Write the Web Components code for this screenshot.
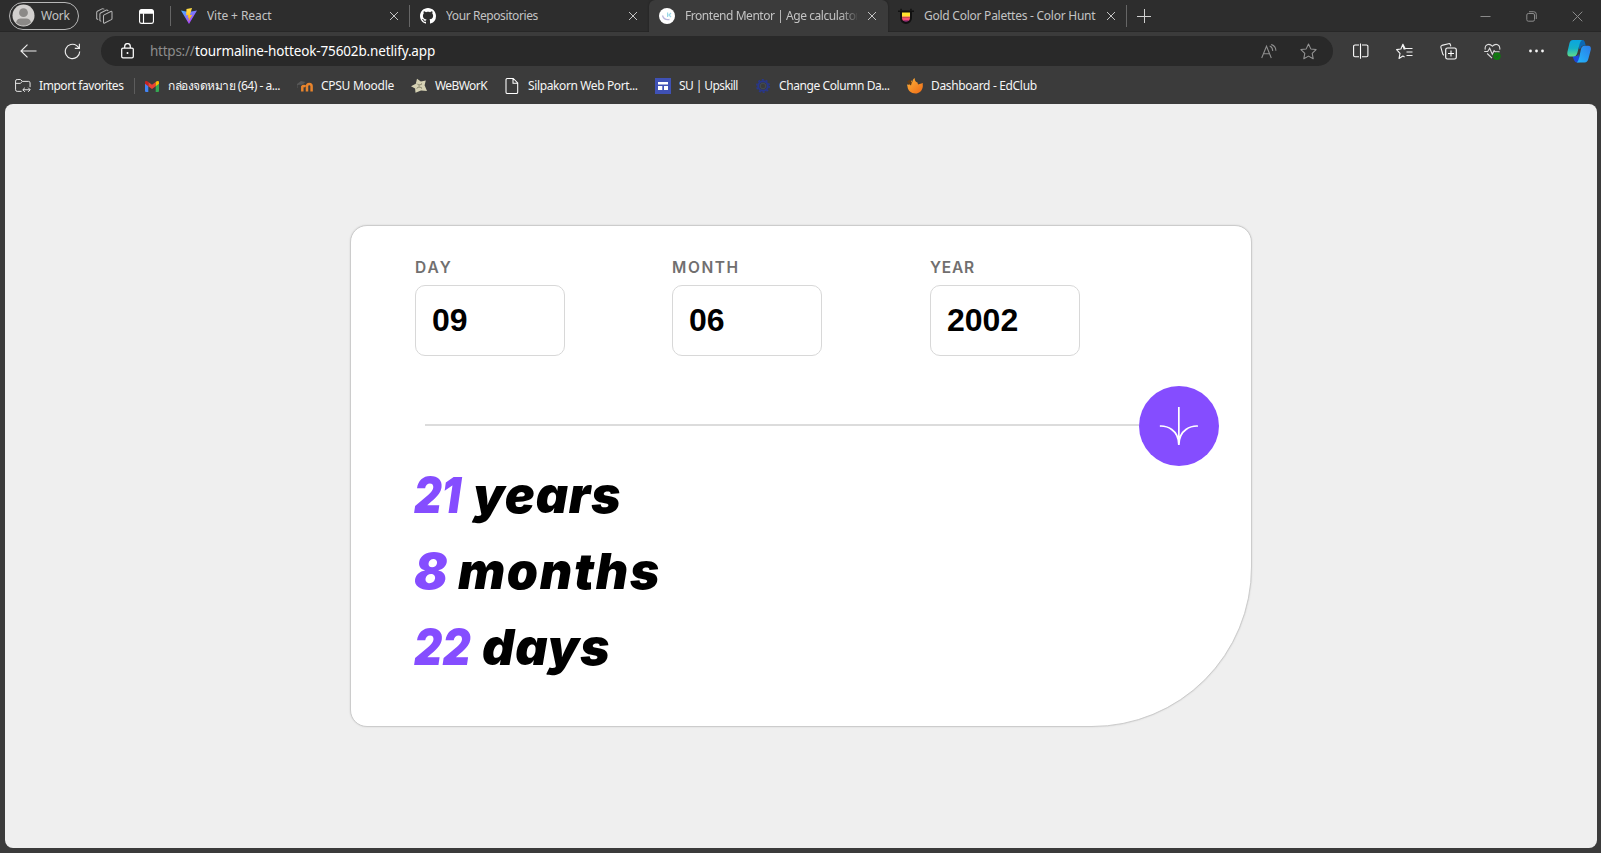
<!DOCTYPE html>
<html lang="en">
<head>
<meta charset="utf-8">
<title>Frontend Mentor | Age calculator app</title>
<style>
html,body{margin:0;height:100%;overflow:hidden;background:#3b3b3b}
body{font-family:"Noto Sans","Open Sans",sans-serif;font-size:12px;color:#fff}
browser-window{height:853px}
</style>
</head>
<body>
<browser-window></browser-window>
<script>
const define=(name,html,extra)=>{
  const t=document.createElement('template');t.innerHTML=html;
  customElements.define(name,class extends HTMLElement{
    constructor(){super();this.attachShadow({mode:'open'}).append(t.content.cloneNode(true));}
    connectedCallback(){extra&&extra(this,this.shadowRoot);}
  });
};

/* Text that tracks itself to occupy exactly w pixels. */
define('fit-text',`<style>:host{display:block;white-space:pre;flex:none}span{display:inline-block}</style><span><slot></slot></span>`,(el,r)=>{
  const w=+el.getAttribute('w'),s=r.querySelector('span');
  el.style.width=w+'px';
  const n=[...el.textContent].length;
  s.style.letterSpacing='0px';
  s.style.letterSpacing=((w-s.offsetWidth)/n)+'px';
});

const icons={
vite:['0 0 32 32','<defs><linearGradient id="a" x1="0" y1="0" x2=".7" y2="1"><stop stop-color="#41b6ff"/><stop offset="1" stop-color="#bd34fe"/></linearGradient><linearGradient id="b" x1="0" y1="0" x2="0" y2="1"><stop stop-color="#ffe14a"/><stop offset="1" stop-color="#ffa800"/></linearGradient></defs><path fill="url(#a)" d="M0 5l15 3 17-3-16 27z"/><path fill="url(#b)" d="M22 0l-11 2-.8 13 4.300-1-1.300 6 3-1-2 8.500 8.500-14-5 1z"/>'],
github:['0 0 16 16','<path fill="#fff" d="M8 0C3.580 0 0 3.580 0 8c0 3.540 2.290 6.530 5.470 7.590.4.070.55-.17.55-.38 0-.19-.010-.82-.010-1.490-2.010.37-2.530-.49-2.690-.94-.090-.23-.48-.94-.82-1.130-.28-.15-.68-.52-.010-.53.63-.010 1.080.58 1.230.82.72 1.210 1.870.87 2.330.66.070-.52.28-.87.510-1.070-1.780-.2-3.640-.89-3.640-3.950 0-.87.31-1.590.82-2.150-.080-.2-.36-1.020.080-2.120 0 0 .67-.21 2.200.82.64-.18 1.320-.27 2-.27s1.360.090 2 .27c1.530-1.040 2.200-.82 2.200-.82.44 1.100.16 1.920.080 2.120.51.56.82 1.270.82 2.150 0 3.070-1.870 3.750-3.650 3.950.29.25.54.73.54 1.480 0 1.070-.010 1.930-.010 2.200 0 .21.15.46.55.38A8.010 8.010 0 0016 8c0-4.420-3.580-8-8-8z"/>'],
frontend:['0 0 16 16','<circle cx="8" cy="8" r="8" fill="#fff"/><path fill="none" stroke="#b9b5dc" stroke-width="1.300" d="M3.500 7.500c1 3.200 4 4.600 7 4"/><path fill="none" stroke="#9ad8e8" stroke-width="1.200" d="M8.600 4.500v4.500M12 5L10 7l2 2"/>'],
hunt:['0 0 16 16','<path fill="#111" d="M0 2.500h16v1.500h-2V10a6 6 0 01-12 0V4H0zM2.300 .8h1.500v1.500H2.300zM12.200 .8h1.500v1.500h-1.500z"/><path fill="#ffe22e" d="M4 4.500h8V8H4z"/><path fill="#ff9a4d" d="M4 8h8v1.500H4z"/><path fill="#f24d70" d="M4 9.500h8c0 2-.5 2.500-1.200 3.300H5.200C4.500 12 4 11.500 4 9.500z"/><path fill="#8a2b80" d="M5.200 12.500h5.600c-1.500 1.700-4 1.700-5.600 0z"/>'],
close:['0 0 10 10','<path d="M1 1l8 8M9 1L1 9" fill="none" stroke="#c4c4c4" stroke-width="1"/>'],
plus:['0 0 14 14','<path d="M7.500 0v14M0 7.500h14" fill="none" stroke="#d0d0d0" stroke-width="1"/>'],
person:['0 0 24 24','<circle cx="12" cy="12" r="11.500" fill="#d2d0ce"/><circle cx="12" cy="9" r="4.600" fill="#8b8987"/><path fill="#8b8987" d="M4.200 19.200C5 16 7 15 9 15h6c2.500 0 4.300 1.200 4.800 4.200a11 11 0 01-15.600 0z"/>'],
workspaces:['0 0 17 16','<g fill="none" stroke="#b5b5b5" stroke-width="1.050" stroke-linejoin="round"><path d="M2.200 11.600L.7 10.800V4.500Q.7 3.700 1.400 3.300L6 .9q.8-.4 1.500 0l.8.4"/><path d="M5.300 13.400l-1.400-.8V6.200q0-.8.700-1.200L10 2.200q.8-.4 1.500 0l.8.500"/><path d="M7.500 8.100q0-.8.700-1.200L14.800 3.500q1.200-.5 1.200.6v6.300q0 .8-.7 1.200L8.700 15q-1.200.5-1.200-.6z"/></g>'],
tabact:['0 0 14 14','<path d="M2.500.6h9a2 2 0 012 2v8.800a2 2 0 01-2 2h-9a2 2 0 01-2-2V2.600a2 2 0 012-2zM4.200 4v9" fill="none" stroke="#fff" stroke-width="1.050"/><path fill="#fff" d="M.5 2.500a2 2 0 012-2h9a2 2 0 012 2v2H.5z"/>'],
back:['0 0 17 14','<path d="M16.500 7H1.200M7.500.7L1 7l6.500 6.300" fill="none" stroke="#ededed" stroke-width="1.150"/>'],
reload:['0 0 17 17','<path d="M15.700 8.500A7.200 7.200 0 1112.700 2.600l2.600 2.500M15.400.8v4.500h-4.600" fill="none" stroke="#ededed" stroke-width="1.150"/>'],
lock:['0 0 13 16','<rect x=".7" y="5" width="11.600" height="9.800" rx="1.300" fill="none" stroke="#fff" stroke-width="1.250"/><path d="M3.700 5V3.400a2.800 2.800 0 015.600 0V5" fill="none" stroke="#fff" stroke-width="1.250"/><circle cx="6.500" cy="9.900" r="1" fill="#fff"/>'],
read:['0 0 16 15','<path d="M.7 14L5.500 2.200 10.300 14M2.300 9.800h6.500M8.700 2c2 .8 3 2.500 3 5M10.200.400c3.200 1 4.700 3.200 4.700 6.400" fill="none" stroke="#8f8f8f" stroke-width="1.050"/>'],
star:['0 0 17 17','<path d="M8.500 1l2.300 4.900 5.300.7-3.900 3.700 1 5.400-4.700-2.600-4.700 2.600 1-5.400L.9 6.600l5.300-.7z" fill="none" stroke="#959595" stroke-width="1.050" stroke-linejoin="round"/>'],
split:['0 0 16 16','<path d="M6 2H2A1.300 1.300 0 00.6 3.300v9.200A1.300 1.300 0 002 13.800h4M9 2h4.500a1.300 1.300 0 011.400 1.300v9.200a1.300 1.300 0 01-1.400 1.300h-4.500M7.500 .5v15.300" fill="none" stroke="#fff" stroke-width="1.100"/>'],
favs:['0 0 17 17','<path d="M9.500 5.900L8 6 6.900 1.200 4.900 6l-4.300.6L4 10.300 3 15.500l3.900-2.400 1.700.8M9.500 5.500h7M10.500 9h6M10.500 12.500h6M6.900 1.200l2.300 4.500" fill="none" stroke="#f2f2f2" stroke-width="1.150" stroke-linejoin="round"/>'],
collections:['0 0 17 17','<path d="M4 12.300c-.8-.2-1.200-.8-1.400-1.600L.9 4.300C.7 3.400 1 2.700 1.900 2.400L8.500.7c.9-.2 1.700.2 1.900 1l.4 1.600" fill="none" stroke="#eee" stroke-width="1.100"/><rect x="5.700" y="5" width="10.600" height="11" rx="1.800" fill="none" stroke="#fff" stroke-width="1.150"/><path d="M11 7.500v6M8 10.500h6" stroke="#fff" stroke-width="1.100"/>'],
heart:['0 0 17 17','<path d="M1.300 6.600C.2 1.700 5-.4 8.400 3.200c3.500-3.600 8.200-1.500 7.300 3.400M.2 8.500h3.500l2-3.200 2.600 6 1.800-3.600 1 1h4.500M3.200 10.500l4.800 4.700" fill="none" stroke="#ddd" stroke-width="1.100"/><circle cx="13" cy="13.300" r="3.700" fill="#0f7a0f"/><path d="M11.300 13.300l1.200 1.200 2.200-2.300" fill="none" stroke="#3a3a3a" stroke-width=".8"/>'],
dots:['0 0 16 4','<g fill="#f5f5f5"><circle cx="2.500" cy="2" r="1.400"/><circle cx="8.500" cy="2" r="1.400"/><circle cx="14.500" cy="2" r="1.400"/></g>'],
copilot:['0 0 24 23','<defs><linearGradient id="a" x1="0" y1="0" x2="0" y2="1"><stop stop-color="#0ba5e0"/><stop offset=".5" stop-color="#15b0c8"/><stop offset="1" stop-color="#62dc86"/></linearGradient><linearGradient id="b" x1="1" y1="0" x2="0" y2="1"><stop stop-color="#2c7be8"/><stop offset="1" stop-color="#22b8fb"/></linearGradient></defs><path fill="#0b68b4" d="M12 0h3.500c2 0 2.500 2 3.200 5.600h-1.700c-2 0-3 1.200-3.500 3L12 9z"/><path fill="#1d48d8" d="M5.500 16H10l1.500-2 1 8.500H10c-2.500 0-3.300-3-4.500-6.500z"/><path fill="url(#a)" d="M6 0h9c-1.600 1-2.200 3.500-3 6.500L10.300 13c-.8 2.300-1.800 3.600-4.300 3.600H3C.7 16.600 0 14.500.4 12L2.500 3C3.100 1 4.100 0 6 0z"/><path fill="url(#b)" d="M17.500 5.800h3.700c2.300 0 3 1.700 2.600 4L21.300 19c-.6 2.200-1.600 3.500-3.600 3.500H9.600c1.800-1 2-3 2.800-6l1.500-7c.7-2.500 1.400-3.700 3.600-3.700z"/>'],
folder:['0 0 17 16','<path d="M7 13.700H2.300A1.700 1.700 0 01.6 12V2.800A1.700 1.700 0 012.300 1.100h3.500l2 2h6.600a1.600 1.600 0 011.600 1.600v4.500M.6 5.200h5l2.200-2M8.500 12h7.500M10.500 9.800L8.300 12l2.200 2.200M14 9.800l2.200 2.200L14 14.200" fill="none" stroke="#e8e8e8" stroke-width="1.050"/>'],
gmail:['0 0 16 16','<path fill="#4285f4" d="M1 4.500l3.300 2.400V14H2a1 1 0 01-1-1z"/><path fill="#34a853" d="M15 4.500l-3.300 2.400V14H14a1 1 0 001-1z"/><path fill="#ea4335" d="M4.300 4L8 6.800 11.700 4v4.200L8 11 4.300 8.200z"/><path fill="#c5221f" d="M1 4.500C1 2.800 2.800 2.700 4.300 4v4.200L1 5.800z"/><path fill="#fbbc04" d="M15 4.500c0-1.700-1.800-1.800-3.300-.5v4.200L15 5.800z"/>'],
moodle:['0 0 16 16','<path d="M5.300 13.500V8.700a1.800 1.800 0 013 0M10 13.500V8.200a2.300 2.300 0 014.600 0v5.300" fill="none" stroke="#e8842c" stroke-width="2.500"/><path fill="#585858" d="M0 6l4-3 4.500 1-3 2.500-5 .5v3H0z"/>'],
webwork:['0 0 16 16','<path fill="#d6d2b4" d="M6 .8l3.800 2.800 5-1-1.200 4.600L16 13l-6-.5-5.500 2.300-.4-4.300L0 8.300l4.800-2.500z"/><path fill="none" stroke="#8f8c74" stroke-width=".7" d="M6 5.500l5 5.500M11 5L5.500 11M7 6.500h4M6 9.500h5"/>'],
file:['0 0 16 16','<path d="M3.300.5h5.900l4.500 4.500v9.200a1.300 1.300 0 01-1.300 1.300H3.300A1.300 1.300 0 012 14.200V1.800A1.300 1.300 0 013.300.5zM9 .7v4.600h4.500" fill="none" stroke="#fff" stroke-width="1.050"/>'],
su:['0 0 16 16','<path fill="#3f51b5" d="M0 0h16v16H0z"/><path fill="#fff" d="M3 4h10v2.600H3zM3 8h4.300v4H3zM9 8h4v4H9z"/>'],
gear:['0 0 16 16','<circle cx="8" cy="8" r="4.800" fill="none" stroke="#29378a" stroke-width="2"/><circle cx="8" cy="8" r="6.200" fill="none" stroke="#29378a" stroke-width="1.600" stroke-dasharray="2 1.900"/><circle cx="8" cy="8" r="2.800" fill="none" stroke="#45515a" stroke-width=".8"/>'],
edclub:['0 0 16 16','<defs><linearGradient id="a" x1="0" y1="0" x2="1" y2="1"><stop stop-color="#ffb43a"/><stop offset="1" stop-color="#ee6a16"/></linearGradient></defs><path fill="url(#a)" d="M7.800 0c-.3 2.500.8 4 2.700 4.500L11 6.500l5-1.500c-.6 1 .1 1.900-.3 4.200C15 13 12 15.500 8.500 15.500 4 15.500.8 12.500.5 8.500L0 6.500l2 .3C2 4.500 3 2.800 4.500 2.500L5.300 4.500C5.400 2.500 6.200.8 7.800 0z"/><path fill="#5c3a18" d="M0 3.500L3 1.500l1.800 3L4 7.500 1.800 6z"/>'],
arrow:['0 0 46 44','<path fill="none" stroke="#fff" stroke-width="2" d="M1 22.019C8.333 21.686 23 25.616 23 44M23 44V0M45 22.019C37.667 21.686 23 25.616 23 44"/>'],
min:['0 0 11 11','<path d="M.5 5.500h10" stroke="#8a8a8a"/>'],
restore:['0 0 11 11','<rect x=".8" y="2.500" width="7.700" height="7.700" rx="1.500" fill="none" stroke="#8a8a8a"/><path d="M3 .7h4.700a2.600 2.600 0 012.600 2.600V8" fill="none" stroke="#8a8a8a"/>'],
exit:['0 0 11 11','<path d="M.7.7l9.600 9.600M10.300.700L.7 10.300" stroke="#8a8a8a"/>']
};
define('ui-icon',`<style>:host{display:block;flex:none}svg{display:block;width:100%;height:100%}</style><div></div>`,(el,r)=>{
  const [vb,body]=icons[el.getAttribute('name')],[,,vw,vh]=vb.split(' ');
  el.style.width=(el.getAttribute('w')||vw)+'px';
  const h=(el.getAttribute('h')||el.getAttribute('w')||vh)+'px';
  el.style.height=h;r.querySelector('div').style.height=h;
  r.querySelector('div').innerHTML=`<svg viewBox="${vb}">${body}</svg>`;
});

define('browser-tab',`<style>
:host{display:flex;align-items:center;box-sizing:border-box;width:239px;height:32px;padding:0 10px;gap:10px;color:#c3c3c3;border-right:1px solid transparent}
:host([divider]){border-image:linear-gradient(transparent 6px,#666 6px,#666 26px,transparent 26px) 1}
:host([active]){background:#3b3b3b;border-radius:6px 6px 0 0;box-shadow:0 0 2px #1c1c1c;clip-path:inset(0 -3px 0 -3px)}
.t{flex:1;min-width:0;overflow:hidden;height:18px;line-height:18px;margin-top:-1px}
:host([fade]) .t{-webkit-mask:linear-gradient(90deg,#000 155px,transparent 175px)}
</style><span id="i"></span><div class="t"><slot></slot></div><ui-icon name="close"></ui-icon>`,(el,r)=>{
  r.querySelector('#i').innerHTML=`<ui-icon name="${el.getAttribute('icon')}" w="16"></ui-icon>`;
});

define('tab-strip',`<style>
:host{display:flex;align-items:center;height:32px;background:#2d2d2d;box-shadow:inset 0 -1px #272727;padding-left:9px}
.profile{display:flex;align-items:center;gap:6px;box-sizing:border-box;width:70px;height:28px;border:1px solid #b8b8b8;border-radius:14px;padding-left:2px;color:#c3c3c3;margin-top:-1px}
.a{margin-left:17px}.b{margin-left:26px}
.sep{width:1px;height:20px;background:#666;margin-left:16px}
.new{margin-left:10px;margin-top:-1px}
.win{margin-left:auto;display:flex;gap:35px;padding-right:18px}
</style>
<div class="profile"><ui-icon name="person" w="23"></ui-icon><fit-text w="29">Work</fit-text></div>
<ui-icon class="a" name="workspaces"></ui-icon><ui-icon class="b" name="tabact" w="15"></ui-icon><div class="sep"></div>
<browser-tab icon="vite" divider><fit-text w="65">Vite + React</fit-text></browser-tab>
<browser-tab icon="github"><fit-text w="92">Your Repositories</fit-text></browser-tab>
<browser-tab icon="frontend" active fade><fit-text w="198">Frontend Mentor | Age calculator app</fit-text></browser-tab>
<browser-tab icon="hunt" divider><fit-text w="171">Gold Color Palettes - Color Hunt</fit-text></browser-tab>
<ui-icon class="new" name="plus"></ui-icon>
<div class="win"><ui-icon name="min"></ui-icon><ui-icon name="restore"></ui-icon><ui-icon name="exit"></ui-icon></div>`);

define('tool-bar',`<style>
:host{display:flex;align-items:center;height:30px;margin-top:4px;padding-left:20px}
.pill{display:flex;align-items:center;box-sizing:border-box;width:1232px;height:30px;border-radius:15px;background:#292929;margin-left:20px;padding:0 16px 0 20px;font-size:13.500px}
.url{display:flex;margin-left:16px;line-height:20px}
.read{margin-left:auto;margin-right:23px}
.tools{display:flex;align-items:center;gap:27px;margin-left:20px}
</style>
<ui-icon name="back"></ui-icon><ui-icon name="reload" style="margin-left:27px"></ui-icon>
<div class="pill"><ui-icon name="lock"></ui-icon><div class="url"><fit-text w="45" style="color:#8c8c8c">https://</fit-text><fit-text w="240">tourmaline-hotteok-75602b.netlify.app</fit-text></div>
<ui-icon class="read" name="read"></ui-icon><ui-icon name="star"></ui-icon></div>
<div class="tools"><ui-icon name="split"></ui-icon><ui-icon name="favs"></ui-icon><ui-icon name="collections"></ui-icon><ui-icon name="heart"></ui-icon><ui-icon name="dots"></ui-icon><ui-icon name="copilot" style="margin-left:-4px"></ui-icon></div>`);

define('book-mark',`<style>:host{display:flex;align-items:center;gap:8px;line-height:18px}</style><span id="i"></span><slot></slot>`,(el,r)=>{
  r.querySelector('#i').innerHTML=`<ui-icon name="${el.getAttribute('icon')}" w="16"></ui-icon>`;
});
define('bookmark-bar',`<style>:host{display:flex;align-items:center;gap:17px;box-sizing:border-box;height:38px;padding:2px 0 0 15px;color:#f5f5f5}
.sep{width:1px;height:16px;background:#5d5d5d;margin:0 -8px 0 -6px}</style>
<book-mark icon="folder"><fit-text w="84">Import favorites</fit-text></book-mark><div class="sep"></div>
<book-mark icon="gmail"><fit-text w="112">กล่องจดหมาย (64) - a...</fit-text></book-mark>
<book-mark icon="moodle"><fit-text w="73">CPSU Moodle</fit-text></book-mark>
<book-mark icon="webwork"><fit-text w="52">WeBWorK</fit-text></book-mark>
<book-mark icon="file"><fit-text w="110">Silpakorn Web Port...</fit-text></book-mark>
<book-mark icon="su"><fit-text w="59">SU | Upskill</fit-text></book-mark>
<book-mark icon="gear"><fit-text w="111">Change Column Da...</fit-text></book-mark>
<book-mark icon="edclub"><fit-text w="106">Dashboard - EdClub</fit-text></book-mark>`);

define('date-field',`<style>
:host{display:block}
.l{font:600 15.500px/20px Inter,sans-serif;color:#716f6f;height:27px}
.v{box-sizing:border-box;width:150px;height:71px;border:1px solid #d8d8d8;border-radius:10px;padding-left:16px;font:700 32px/68px "Liberation Sans",Arial,sans-serif;color:#000}
</style><div class="l"><slot name="label"></slot></div><div class="v"><slot></slot></div>`);

define('result-line',`<style>
:host{display:flex;height:76px;font:italic 900 50px/76px Inter,"Open Sans",sans-serif;font-feature-settings:"cv11";color:#000}
.n{color:#854dff;transform:scaleX(var(--squeeze,1));transform-origin:0 0;font-size:49.500px}
</style><div class="n"><slot name="count"></slot></div><slot></slot>`);

define('age-card',`<style>
:host{display:block;box-sizing:border-box;width:902px;height:502px;background:#fff;border:1px solid #ccc;border-radius:17px 17px 160px 17px;padding:32px 32px 0 64px;box-shadow:0 0 2px rgba(0,0,0,.12)}
.fields{display:grid;grid-template-columns:257px 258px 1fr}
.rule{display:flex;align-items:center;height:80px;margin-top:30px;padding-left:10px}
.line{flex:1;height:2px;background:#dcdcdc;margin-top:-2px}
.go{width:80px;height:80px;border-radius:50%;background:#854dff;display:flex;align-items:center;justify-content:center}
.res{margin:-9px 0 0 -1px}
</style>
<div class="fields">
<date-field><fit-text slot="label" w="38">DAY</fit-text>09</date-field>
<date-field><fit-text slot="label" w="68">MONTH</fit-text>06</date-field>
<date-field><fit-text slot="label" w="45">YEAR</fit-text>2002</date-field>
</div>
<div class="rule"><div class="line"></div><div class="go"><ui-icon name="arrow" w="39.700" h="38"></ui-icon></div></div>
<div class="res">
<result-line style="gap:6px;--squeeze:.87"><fit-text slot="count" w="53">21</fit-text><fit-text w="148">years</fit-text></result-line>
<result-line style="gap:11px"><fit-text slot="count" w="33">8</fit-text><fit-text w="203">months</fit-text></result-line>
<result-line style="gap:3px;--squeeze:.88"><fit-text slot="count" w="65">22</fit-text><fit-text w="129">days</fit-text></result-line>
</div>`);

define('page-view',`<style>:host{display:flex;box-sizing:border-box;justify-content:center;align-items:flex-start;width:1592px;height:744px;margin-left:5px;padding-top:121px;background:#efefef;border-radius:8px}</style><age-card></age-card>`);
define('browser-window',`<style>:host{display:block;background:#3b3b3b;overflow:hidden}</style><tab-strip></tab-strip><tool-bar></tool-bar><bookmark-bar></bookmark-bar><page-view></page-view>`);
</script>
</body>
</html>
